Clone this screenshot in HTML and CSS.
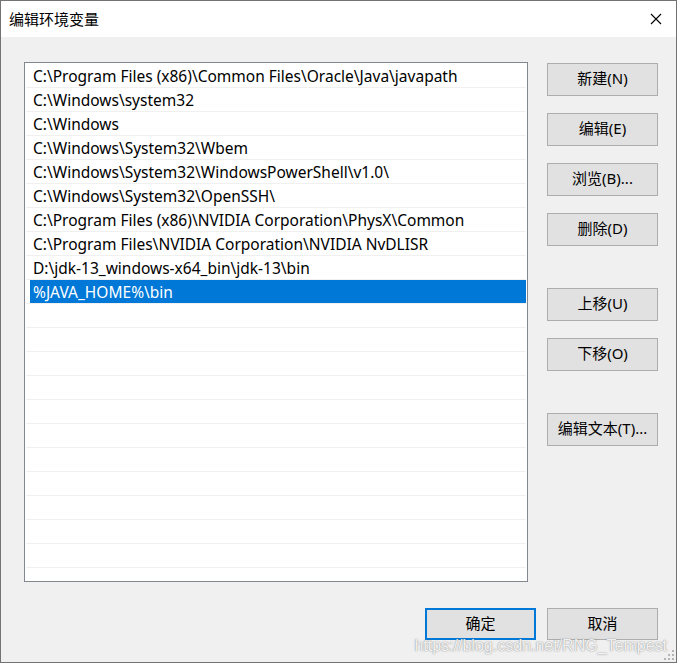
FILE: index.html
```html
<!DOCTYPE html>
<html lang="zh-CN">
<head>
    <meta charset="UTF-8">
    <title>编辑环境变量</title>
    <link rel="stylesheet" href="styles.css">
</head>
<body>
    <div class="dialog">
        <div class="titlebar">
            <span class="title">编辑环境变量</span>
            <svg class="close" width="12" height="12" viewBox="0 0 12 12">
                <path d="M1 1 L11 11 M11 1 L1 11" stroke="#000" stroke-width="1.1" fill="none"/>
            </svg>
        </div>
        <div class="content">
            <div class="main">
                <div class="list">
                    <div class="item">C:\Program Files (x86)\Common Files\Oracle\Java\javapath</div>
                    <div class="item">C:\Windows\system32</div>
                    <div class="item">C:\Windows</div>
                    <div class="item">C:\Windows\System32\Wbem</div>
                    <div class="item">C:\Windows\System32\WindowsPowerShell\v1.0\</div>
                    <div class="item">C:\Windows\System32\OpenSSH\</div>
                    <div class="item">C:\Program Files (x86)\NVIDIA Corporation\PhysX\Common</div>
                    <div class="item">C:\Program Files\NVIDIA Corporation\NVIDIA NvDLISR</div>
                    <div class="item">D:\jdk-13_windows-x64_bin\jdk-13\bin</div>
                    <div class="item selected">%JAVA_HOME%\bin</div>
                    <div class="item"></div>
                    <div class="item"></div>
                    <div class="item"></div>
                    <div class="item"></div>
                    <div class="item"></div>
                    <div class="item"></div>
                    <div class="item"></div>
                    <div class="item"></div>
                    <div class="item"></div>
                    <div class="item"></div>
                    <div class="item"></div>
                    <div class="item"></div>
                </div>
                <div class="side">
                    <button class="btn">新建(N)</button>
                    <button class="btn">编辑(E)</button>
                    <button class="btn">浏览(B)...</button>
                    <button class="btn">删除(D)</button>
                    <button class="btn group">上移(U)</button>
                    <button class="btn">下移(O)</button>
                    <button class="btn group">编辑文本(T)...</button>
                </div>
            </div>
            <div class="footer">
                <button class="btn default">确定</button>
                <button class="btn">取消</button>
            </div>
        </div>
        <div class="watermark">https://blog.csdn.net/RNG_Tempest</div>
        <svg class="grip" width="11" height="11" viewBox="0 0 11 11">
            <g fill="#b5b5b5">
                <rect x="8" y="0" width="2" height="2"/>
                <rect x="4" y="4" width="2" height="2"/>
                <rect x="8" y="4" width="2" height="2"/>
                <rect x="0" y="8" width="2" height="2"/>
                <rect x="4" y="8" width="2" height="2"/>
                <rect x="8" y="8" width="2" height="2"/>
            </g>
        </svg>
    </div>
</body>
</html>
```

FILE: styles.css
```css
body {
    margin: 0;
    font-family: "Noto Sans", "Noto Sans CJK SC", sans-serif;
    font-size: 15px;
    color: #000;
}

.dialog {
    position: relative;
    width: 677px;
    height: 663px;
    box-sizing: border-box;
    border: 1px solid #737373;
    background-color: #f0f0f0;
    display: flex;
    flex-direction: column;
    overflow: hidden;
}

.titlebar {
    height: 36px;
    background-color: #fff;
    display: flex;
    align-items: center;
    justify-content: space-between;
    padding: 0 14px 0 8px;
}

.title {
    font-family: "Noto Sans CJK SC", sans-serif;
    font-size: 15px;
    line-height: 1;
    margin-top: -1px;
}

.close {
    display: block;
    margin-top: -1px;
}

.content {
    flex: 1;
    padding: 25px 18px 0 23px;
}

.main {
    display: flex;
    gap: 19px;
}

.list {
    width: 504px;
    height: 520px;
    box-sizing: border-box;
    border: 1px solid #828790;
    background-color: #fff;
    padding-top: 1px;
    overflow: hidden;
}

.item {
    height: 24px;
    box-sizing: border-box;
    margin: 0 1px;
    padding-left: 7px;
    border-bottom: 1px solid #f0f0f0;
    font-size: 15.5px;
    line-height: 24px;
    white-space: nowrap;
}

.item.selected {
    color: #fff;
    background-image: linear-gradient(#0078d7, #0078d7);
    background-repeat: no-repeat;
    background-position: right top;
    background-size: calc(100% - 4px) 100%;
}

.side {
    display: flex;
    flex-direction: column;
    gap: 17px;
    padding-top: 1px;
}

.btn {
    width: 111px;
    height: 33px;
    box-sizing: border-box;
    border: 1px solid #adadad;
    background-color: #e1e1e1;
    font-family: "Noto Sans", "Noto Sans CJK SC", sans-serif;
    font-size: 15px;
    line-height: 1;
    color: #000;
    padding: 0 0 2px;
    cursor: pointer;
}

.btn:hover {
    background-color: #e5f1fb;
    border-color: #0078d7;
}

.btn.group {
    margin-top: 25px;
}

.footer {
    display: flex;
    justify-content: flex-end;
    gap: 11px;
    margin-top: 26px;
}

.footer .btn {
    height: 32px;
}

.btn.default {
    border: 2px solid #0078d7;
}

.watermark {
    position: absolute;
    right: 9px;
    bottom: 7px;
    font-family: "Liberation Sans", sans-serif;
    font-size: 16px;
    color: rgba(255, 255, 255, 0.9);
    text-shadow: 0 0 1px rgba(100, 100, 100, 0.7), 0 0 2px rgba(150, 150, 150, 0.5);
}

.grip {
    position: absolute;
    right: 1px;
    bottom: 1px;
}
```
